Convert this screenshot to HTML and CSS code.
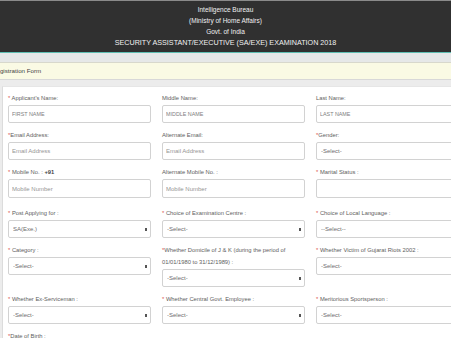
FILE: index.html
```html
<!DOCTYPE html>
<html lang="en">
<head>
  <meta charset="UTF-8" />
  <meta name="viewport" content="width=device-width, initial-scale=1.0"/>
  <title>IB SA/EXE Registration</title>
  <link rel="stylesheet" href="styles.css">
</head>
<body>
  <div class="header">
    <div>Intelligence Bureau</div>
    <div>(Ministry of Home Affairs)</div>
    <div>Govt. of India</div>
    <div class="exam">SECURITY ASSISTANT/EXECUTIVE (SA/EXE) EXAMINATION 2018</div>
  </div>
  <div class="strip"></div>

  <div class="panel-heading">Registration Form</div>

  <div class="card">
    <div class="form">
      <div class="field">
        <label><span class="req">*</span> Applicant's Name:</label>
        <input type="text" class="caps" placeholder="FIRST NAME">
      </div>
      <div class="field">
        <label>Middle Name:</label>
        <input type="text" class="caps" placeholder="MIDDLE NAME">
      </div>
      <div class="field">
        <label>Last Name:</label>
        <input type="text" class="caps" placeholder="LAST NAME">
      </div>

      <div class="field">
        <label><span class="req">*</span>Email Address:</label>
        <input type="text" placeholder="Email Address">
      </div>
      <div class="field">
        <label>Alternate Email:</label>
        <input type="text" placeholder="Email Address">
      </div>
      <div class="field">
        <label><span class="req">*</span>Gender:</label>
        <div class="select"><select><option>-Select-</option></select></div>
      </div>

      <div class="field">
        <label><span class="req">*</span> Mobile No. : <b>+91</b></label>
        <input type="text" class="tall" placeholder="Mobile Number">
      </div>
      <div class="field">
        <label>Alternate Mobile No. :</label>
        <input type="text" class="tall" placeholder="Mobile Number">
      </div>
      <div class="field">
        <label><span class="req">*</span> Marital Status :</label>
        <input type="text" class="tall">
      </div>

      <div class="field push">
        <label><span class="req">*</span> Post Applying for :</label>
        <div class="select arrow"><select><option>SA(Exe.)</option></select></div>
      </div>
      <div class="field push">
        <label><span class="req">*</span> Choice of Examination Centre :</label>
        <div class="select arrow"><select><option>-Select-</option></select></div>
      </div>
      <div class="field push">
        <label><span class="req">*</span> Choice of Local Language :</label>
        <div class="select"><select><option>--Select--</option></select></div>
      </div>

      <div class="field">
        <label><span class="req">*</span> Category :</label>
        <div class="select arrow"><select><option>-Select-</option></select></div>
      </div>
      <div class="field">
        <label><span class="req">*</span>Whether Domicile of J &amp; K (during the period of<br>01/01/1980 to 31/12/1989) :</label>
        <div class="select arrow"><select><option>-Select-</option></select></div>
      </div>
      <div class="field">
        <label><span class="req">*</span> Whether Victim of Gujarat Riots 2002 :</label>
        <div class="select"><select><option>-Select-</option></select></div>
      </div>

      <div class="field">
        <label><span class="req">*</span> Whether Ex-Serviceman :</label>
        <div class="select arrow"><select><option>-Select-</option></select></div>
      </div>
      <div class="field">
        <label><span class="req">*</span> Whether Central Govt. Employee :</label>
        <div class="select arrow"><select><option>-Select-</option></select></div>
      </div>
      <div class="field">
        <label><span class="req">*</span> Meritorious Sportsperson :</label>
        <div class="select"><select><option>-Select-</option></select></div>
      </div>

      <div class="field">
        <label><span class="req">*</span>Date of Birth :</label>
      </div>
    </div>
  </div>
</body>
</html>
```

FILE: styles.css
```css
body {
  font-family: "Liberation Sans", Arial, sans-serif;
  background-color: #ececec;
  margin: 0;
  padding: 0;
  overflow: hidden;
}
.header {
  background-color: #303030;
  color: #f0f0f0;
  text-align: center;
  font-size: 6.5px;
  line-height: 11px;
  padding: 3px 0 5px;
  border-top: 1px solid #8a8a8a;
  height: 43px;
}
.header .exam {
  font-size: 7.2px;
}
.strip {
  border-top: 1px solid #5fbfb3;
  background-color: #e6e8e8;
  height: 9px;
}
.panel-heading {
  background-color: #fafae4;
  border-top: 1px solid #d8d8cc;
  border-bottom: 1px solid #d8d8d8;
  font-size: 6.2px;
  color: #444;
  height: 16px;
  line-height: 16px;
  text-indent: -8px;
  overflow: hidden;
  white-space: nowrap;
}
.card {
  margin: 6px 0 0 2px;
  background: #fff;
  border-left: 1px solid #dcdcdc;
  border-top: 1px solid #e6e6e6;
  padding: 5px 0 0 5px;
  min-height: 260px;
}
.form {
  display: grid;
  grid-template-columns: 143px 143px 143px;
  column-gap: 11px;
  row-gap: 6px;
  align-items: start;
}
.field.push {
  margin-top: 3px;
}
.field label {
  display: block;
  font-size: 5.8px;
  line-height: 12px;
  color: #5e5e5e;
  margin-bottom: 1px;
  white-space: nowrap;
}
.field label b {
  color: #444;
}
.req {
  color: #d9534f;
}
.field input,
.field select {
  display: block;
  box-sizing: border-box;
  width: 100%;
  height: 18px;
  border: 1px solid #d2d2d2;
  border-radius: 2px;
  background: #fff;
  font-family: "Liberation Sans", Arial, sans-serif;
  font-size: 6px;
  color: #6e6e6e;
  padding: 0 3px;
  margin: 0;
  outline: none;
}
.field select {
  padding: 0 4px;
  -webkit-appearance: none;
  appearance: none;
}
.field input.tall {
  height: 19px;
}
.field input::placeholder {
  color: #959595;
}
.field input.caps::placeholder {
  color: #808080;
  font-size: 5.4px;
}
.select {
  position: relative;
}
.select.arrow::after {
  content: "";
  position: absolute;
  right: 4px;
  top: 8px;
  width: 2px;
  height: 3px;
  background: #555;
}
```
